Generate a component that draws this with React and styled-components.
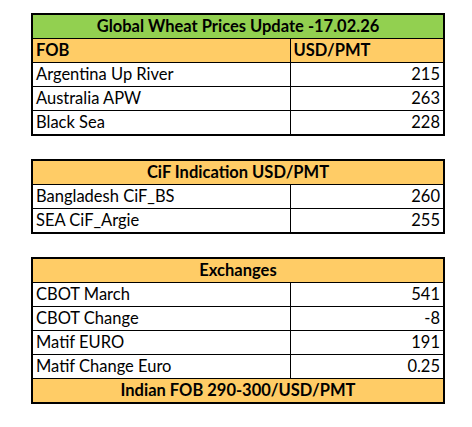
import React from 'react'
import styled, { createGlobalStyle } from 'styled-components'

const GlobalStyle = createGlobalStyle`
  body {
    margin: 0;
    background: #ffffff;
    font-family: Lato, "Open Sans", "Liberation Sans", sans-serif;
  }
`

const Styled = {
    Page: styled.div`
      display: flex;
      flex-direction: column;
      gap: 23px;
      width: 472px;
      min-height: 427px;
      padding: 13px 0 0 31px;
      box-sizing: border-box;
    `,
    Table: styled.table`
      width: 414px;
      border-collapse: collapse;
      border: 2px solid #000000;
      table-layout: fixed;
      font-size: 16.5px;
      color: #000000;
    `,
    Cell: styled.td`
      height: 23px;
      padding: 0 3px;
      border: 1px solid #000000;
      box-sizing: border-box;
      line-height: 23px;
      white-space: nowrap;
      text-align: ${props => props.align || 'left'};
      font-weight: ${props => props.bold ? 700 : 400};
      background: ${props => props.bg || '#ffffff'};
    `,
}

const GREEN = '#92D050'
const GOLD = '#FFCC66'

const fob = [
    ['Argentina Up River', '215'],
    ['Australia APW', '263'],
    ['Black Sea', '228'],
]

const cif = [
    ['Bangladesh CiF_BS', '260'],
    ['SEA CiF_Argie', '255'],
]

const exchanges = [
    ['CBOT March', '541'],
    ['CBOT Change', '-8'],
    ['Matif EURO', '191'],
    ['Matif Change Euro', '0.25'],
]

const Rows = ({ data }) => data.map(([name, value]) => (
    <tr key={name}>
        <Styled.Cell>{name}</Styled.Cell>
        <Styled.Cell align="right">{value}</Styled.Cell>
    </tr>
))

const Cols = () => (
    <colgroup>
        <col style={{ width: 258 }} />
        <col />
    </colgroup>
)

const App = () => {
    return (
        <>
            <GlobalStyle />
            <Styled.Page>
                <Styled.Table>
                    <Cols />
                    <tbody>
                        <tr>
                            <Styled.Cell colSpan={2} align="center" bold bg={GREEN}>
                                Global Wheat Prices Update -17.02.26
                            </Styled.Cell>
                        </tr>
                        <tr>
                            <Styled.Cell bold bg={GOLD}>FOB</Styled.Cell>
                            <Styled.Cell bold bg={GOLD}>USD/PMT</Styled.Cell>
                        </tr>
                        <Rows data={fob} />
                    </tbody>
                </Styled.Table>

                <Styled.Table>
                    <Cols />
                    <tbody>
                        <tr>
                            <Styled.Cell colSpan={2} align="center" bold bg={GOLD}>
                                CiF Indication USD/PMT
                            </Styled.Cell>
                        </tr>
                        <Rows data={cif} />
                    </tbody>
                </Styled.Table>

                <Styled.Table>
                    <Cols />
                    <tbody>
                        <tr>
                            <Styled.Cell colSpan={2} align="center" bold bg={GOLD}>
                                Exchanges
                            </Styled.Cell>
                        </tr>
                        <Rows data={exchanges} />
                        <tr>
                            <Styled.Cell colSpan={2} align="center" bold bg={GOLD}>
                                Indian FOB 290-300/USD/PMT
                            </Styled.Cell>
                        </tr>
                    </tbody>
                </Styled.Table>
            </Styled.Page>
        </>
    )
}

export default App
